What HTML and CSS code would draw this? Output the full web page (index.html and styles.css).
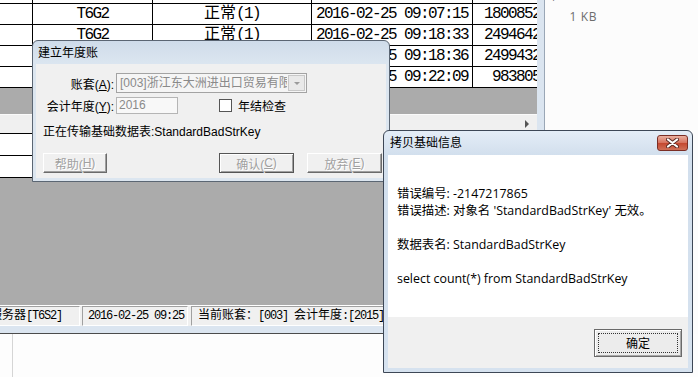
FILE: index.html
```html
<!DOCTYPE html>
<html>
<head>
<meta charset="utf-8">
<link rel="stylesheet" href="styles.css">
</head>
<body>
<div class="desk">
  <div class="top">
    <div class="app">
      <div class="app-main">
        <div class="app-content">
          <div class="grid g1">
            <div class="c"></div><div class="c"></div><div class="c"></div><div class="c"></div><div class="c"></div>
            <div class="c"></div><div class="c ctr">T6G2</div><div class="c ctr"><span class="cjk">正常</span>(1)</div><div class="c ctr">2016-02-25 09:07:15</div><div class="c num">1800852</div>
            <div class="c"></div><div class="c ctr">T6G2</div><div class="c ctr"><span class="cjk">正常</span>(1)</div><div class="c ctr">2016-02-25 09:18:33</div><div class="c num">2494642</div>
            <div class="c"></div><div class="c ctr">T6G2</div><div class="c ctr"><span class="cjk">正常</span>(1)</div><div class="c ctr">2016-02-25 09:18:36</div><div class="c num">2499432</div>
            <div class="c"></div><div class="c ctr">T6G2</div><div class="c ctr"><span class="cjk">正常</span>(1)</div><div class="c ctr">2016-02-25 09:22:09</div><div class="c num">983805</div>
          </div>
          <div class="gap1"></div>
          <div class="hscroll"><span class="arrow"></span></div>
          <div class="grid g2">
            <div class="c"></div><div class="c"></div><div class="c"></div><div class="c"></div><div class="c"></div>
            <div class="c"></div><div class="c"></div><div class="c"></div><div class="c"></div><div class="c"></div>
          </div>
          <div class="fill"></div>
          <div class="status">
            <div class="sp sp1"><span class="cjk">服务器</span>[T6S2]</div>
            <div class="sp sp2">2016-02-25 09:25</div>
            <div class="sp sp3"><span class="cjk">当前账套：</span>[003] <span class="cjk">会计年度</span>:[2015]</div>
          </div>
        </div>
        <div class="frame-r"></div>
      </div>
      <div class="frame-b"></div>
    </div>
    <div class="explorer">
      <div class="list">
        <div class="row">1,455 KB</div>
        <div class="row">1 KB</div>
      </div>
    </div>
  </div>
  <div class="lower"><div class="pane"></div></div>

  <div class="dlg1">
    <div class="ttl">建立年度账</div>
    <div class="body">
      <div class="rowA">
        <div class="lbl">账套(<u>A</u>):</div>
        <div class="combo"><div class="val">[003]浙江东大洲进出口贸易有限公司</div><div class="dd"><span class="tri"></span></div></div>
      </div>
      <div class="rowB">
        <div class="lbl">会计年度(<u>Y</u>):</div>
        <div class="inp">2016</div>
        <div class="chk"></div>
        <div class="chklbl">年结检查</div>
      </div>
      <div class="rowC">正在传输基础数据表:StandardBadStrKey</div>
      <div class="rowD">
        <div class="btn b1">帮助(<u>H</u>)</div>
        <div class="btn b2">确认(<u>C</u>)</div>
        <div class="btn b3">放弃(<u>E</u>)</div>
      </div>
    </div>
  </div>

  <div class="dlg2">
    <div class="ttl2">
      <div class="t">拷贝基础信息</div>
      <div class="close">
        <svg width="13" height="10" viewBox="0 0 13 10">
          <path d="M2 1.5 L11 8.5 M11 1.5 L2 8.5" stroke="#5a2a24" stroke-width="4" stroke-linecap="round"/>
          <path d="M2 1.5 L11 8.5 M11 1.5 L2 8.5" stroke="#ffffff" stroke-width="2.2" stroke-linecap="round"/>
        </svg>
      </div>
    </div>
    <div class="inner">
      <div class="msg">
        <div class="ln">错误编号: -2147217865</div>
        <div class="ln">错误描述: 对象名 'StandardBadStrKey' 无效。</div>
        <div class="ln">&nbsp;</div>
        <div class="ln">数据表名: StandardBadStrKey</div>
        <div class="ln">&nbsp;</div>
        <div class="ln">select count(*) from StandardBadStrKey</div>
      </div>
      <div class="btnbar">
        <div class="ok"><span class="focus">确定</span></div>
      </div>
    </div>
  </div>
</div>
</body>
</html>
```
FILE: styles.css
```css
body {
  margin: 0;
  background: #fff;
}
.desk {
  width: 698px;
  height: 377px;
  overflow: hidden;
  position: relative;
  display: grid;
  grid-template-rows: 334px 43px;
}
.top {
  display: flex;
  min-height: 0;
}
.app {
  width: 545px;
  display: flex;
  flex-direction: column;
  flex: none;
}
.app-main {
  display: flex;
  height: 326px;
}
.app-content {
  width: 537px;
  display: flex;
  flex-direction: column;
  overflow: hidden;
  background: #ababab;
}
.frame-r {
  width: 8px;
  background: #dbe5f0;
  border-right: 1px solid #9aa7b6;
  box-sizing: border-box;
}
.frame-b {
  height: 8px;
  background: #dbe5f0;
  border-bottom: 1px solid #4b4b4b;
  box-sizing: border-box;
}
.explorer {
  flex: 1;
  background: #fcfcfc;
  font: 12px "Open Sans", sans-serif;
  letter-spacing: 0.6px;
  color: #6d6d6d;
  overflow: hidden;
}
.explorer .list {
  margin-top: -16px;
}
.explorer .row {
  height: 22px;
  line-height: 22px;
  width: 52px;
  text-align: right;
  white-space: nowrap;
}
.lower {
  background: #fdfdfd;
}
.lower .pane {
  margin-left: 12px;
  height: 100%;
  border-left: 1px solid #d5d5d5;
}

/* grid */
.grid {
  display: grid;
  grid-template-columns: 33px 120px 159px 161px 80px;
  width: 553px;
  flex: none;
  background: #fff;
  font: 16px "Liberation Mono", "Noto Sans CJK SC", monospace;
  letter-spacing: -1.6px;
  color: #000;
}
.g1 {
  grid-template-rows: 4px repeat(4, 21px);
}
.g2 {
  grid-template-rows: 22px 22px;
  border-top: 1px solid #000;
}
.c {
  border-right: 1px solid #000;
  border-bottom: 1px solid #000;
  line-height: 20px;
  white-space: nowrap;
  overflow: hidden;
  box-sizing: border-box;
}
.ctr {
  text-align: center;
}
.num {
  text-align: right;
  padding-right: 12px;
}
.cjk {
  letter-spacing: 0;
}
.gap1 {
  height: 26px;
  flex: none;
}
.hscroll {
  height: 19px;
  flex: none;
  background: #f0f0f0;
  border-top: 1px solid #fafafa;
  box-sizing: border-box;
  display: flex;
  justify-content: flex-end;
  align-items: center;
  padding-right: 8px;
}
.arrow {
  width: 0;
  height: 0;
  border-left: 4px solid #555;
  border-top: 4px solid transparent;
  border-bottom: 4px solid transparent;
}
.fill {
  flex: 1;
}
.status {
  height: 21px;
  flex: none;
  display: flex;
  background: #f0f0f0;
  border-top: 1px solid #fff;
  box-sizing: border-box;
  font: 12px "Liberation Mono", "Noto Sans CJK SC", monospace;
  letter-spacing: -1.2px;
  color: #000;
}
.sp {
  height: 20px;
  line-height: 18px;
  border: 1px solid;
  border-color: #a0a0a0 #fff #fff #a0a0a0;
  box-sizing: border-box;
  white-space: nowrap;
  overflow: hidden;
}
.sp1 {
  margin-left: -14px;
  width: 94px;
  padding-left: 3px;
  flex: none;
}
.sp2 {
  margin-left: 2px;
  width: 106px;
  padding-left: 5px;
  flex: none;
}
.sp3 {
  margin-left: 3px;
  flex: 1;
  padding-left: 6px;
}

/* dialog 1 */
.dlg1 {
  position: absolute;
  left: 32px;
  top: 40px;
  width: 358px;
  height: 142px;
  box-sizing: border-box;
  border: 1px solid #5b6673;
  border-radius: 6px 6px 0 0;
  background: linear-gradient(#cfdcea, #dce6f0 24px);
  padding: 0 3px 3px;
  display: flex;
  flex-direction: column;
  font: 12px "Liberation Sans", "Noto Sans CJK SC", sans-serif;
  color: #000;
}
.dlg1 .ttl {
  height: 23px;
  line-height: 24px;
  padding-left: 2px;
  flex: none;
}
.dlg1 .body {
  flex: 1;
  background: #f0f0f0;
  padding-top: 9px;
}
.rowA {
  display: flex;
  align-items: center;
  height: 20px;
}
.lbl {
  width: 78px;
  text-align: right;
  flex: none;
  white-space: nowrap;
}
.combo {
  margin-left: 2px;
  width: 191px;
  height: 20px;
  border: 1px solid #a3a3a3;
  background: #f5f5f5;
  display: flex;
  box-sizing: border-box;
  color: #8a8a8a;
}
.combo .val {
  flex: 1;
  padding-left: 3px;
  line-height: 18px;
  overflow: hidden;
  white-space: nowrap;
}
.combo .dd {
  width: 15px;
  margin: 1px;
  border: 1px solid #c8c8c8;
  background: #e9e9e9;
  display: flex;
  align-items: center;
  justify-content: center;
}
.tri {
  width: 0;
  height: 0;
  border-top: 3px solid #9a9a9a;
  border-left: 3px solid transparent;
  border-right: 3px solid transparent;
}
.rowB {
  margin-top: 4px;
  display: flex;
  align-items: center;
  height: 17px;
}
.inp {
  margin-left: 2px;
  width: 62px;
  height: 17px;
  box-sizing: border-box;
  border: 1px solid #b5b5b5;
  background: #f8f8f8;
  color: #8a8a8a;
  line-height: 15px;
  padding-left: 2px;
}
.chk {
  margin-left: 41px;
  width: 13px;
  height: 13px;
  box-sizing: border-box;
  border: 1px solid #555;
  background: #fff;
}
.chklbl {
  margin-left: 6px;
}
.rowC {
  margin-top: 11px;
  padding-left: 7px;
  line-height: 14px;
  white-space: nowrap;
}
.rowD {
  margin-top: 14px;
  display: flex;
  padding-left: 7px;
}
.btn {
  height: 20px;
  box-sizing: border-box;
  border: 1px solid;
  border-color: #fff #6b6b6b #6b6b6b #fff;
  box-shadow: inset -1px -1px #a0a0a0;
  background: #f0f0f0;
  color: #a0a0a0;
  text-shadow: 1px 1px #fff;
  display: flex;
  align-items: center;
  justify-content: center;
  flex: none;
}
.b1 {
  width: 64px;
}
.b2 {
  width: 75px;
  margin-left: 112px;
  border-color: #555;
  box-shadow: inset 1px 1px #fff, inset -1px -1px #a0a0a0;
}
.b3 {
  width: 75px;
  margin-left: 13px;
}

/* dialog 2 */
.dlg2 {
  position: absolute;
  left: 383px;
  top: 130px;
  width: 310px;
  height: 243px;
  box-sizing: border-box;
  border: 1px solid #3d4756;
  border-radius: 6px 6px 0 0;
  background: linear-gradient(#e4edf7, #d2dfed 24px, #d6e2ef);
  display: flex;
  flex-direction: column;
  font: 12px "Open Sans", "Noto Sans CJK SC", sans-serif;
  color: #000;
}
.ttl2 {
  height: 24px;
  flex: none;
  display: flex;
  justify-content: space-between;
  align-items: flex-start;
  padding: 4px 4px 0 6px;
  box-sizing: border-box;
}
.ttl2 .t {
  line-height: 16px;
}
.close {
  width: 31px;
  height: 16px;
  box-sizing: border-box;
  border: 1px solid #7b2e25;
  border-radius: 3px;
  background: linear-gradient(#eab0a0, #d6705c 50%, #c4472f 51%, #d07058);
  display: flex;
  align-items: center;
  justify-content: center;
}
.inner {
  flex: 1;
  margin: 0 4px 4px;
  display: flex;
  flex-direction: column;
}
.msg {
  background: #fff;
  height: 162px;
  flex: none;
  padding: 30px 0 0 9px;
  box-sizing: border-box;
  font-size: 12.4px;
}
.ln {
  line-height: 17px;
  height: 17px;
  white-space: nowrap;
}
.btnbar {
  flex: 1;
  background: #f0f0f0;
  display: flex;
  justify-content: flex-end;
  align-items: flex-start;
  padding: 12px 6px 0 0;
}
.ok {
  width: 88px;
  height: 28px;
  box-sizing: border-box;
  border: 1px solid #6a6a6a;
  background: #ececec;
  box-shadow: inset 1px 1px #fff, inset -1px -1px #a8a8a8;
  padding: 3px;
  display: flex;
}
.focus {
  flex: 1;
  border: 1px dotted #333;
  display: flex;
  align-items: center;
  justify-content: center;
}
```
